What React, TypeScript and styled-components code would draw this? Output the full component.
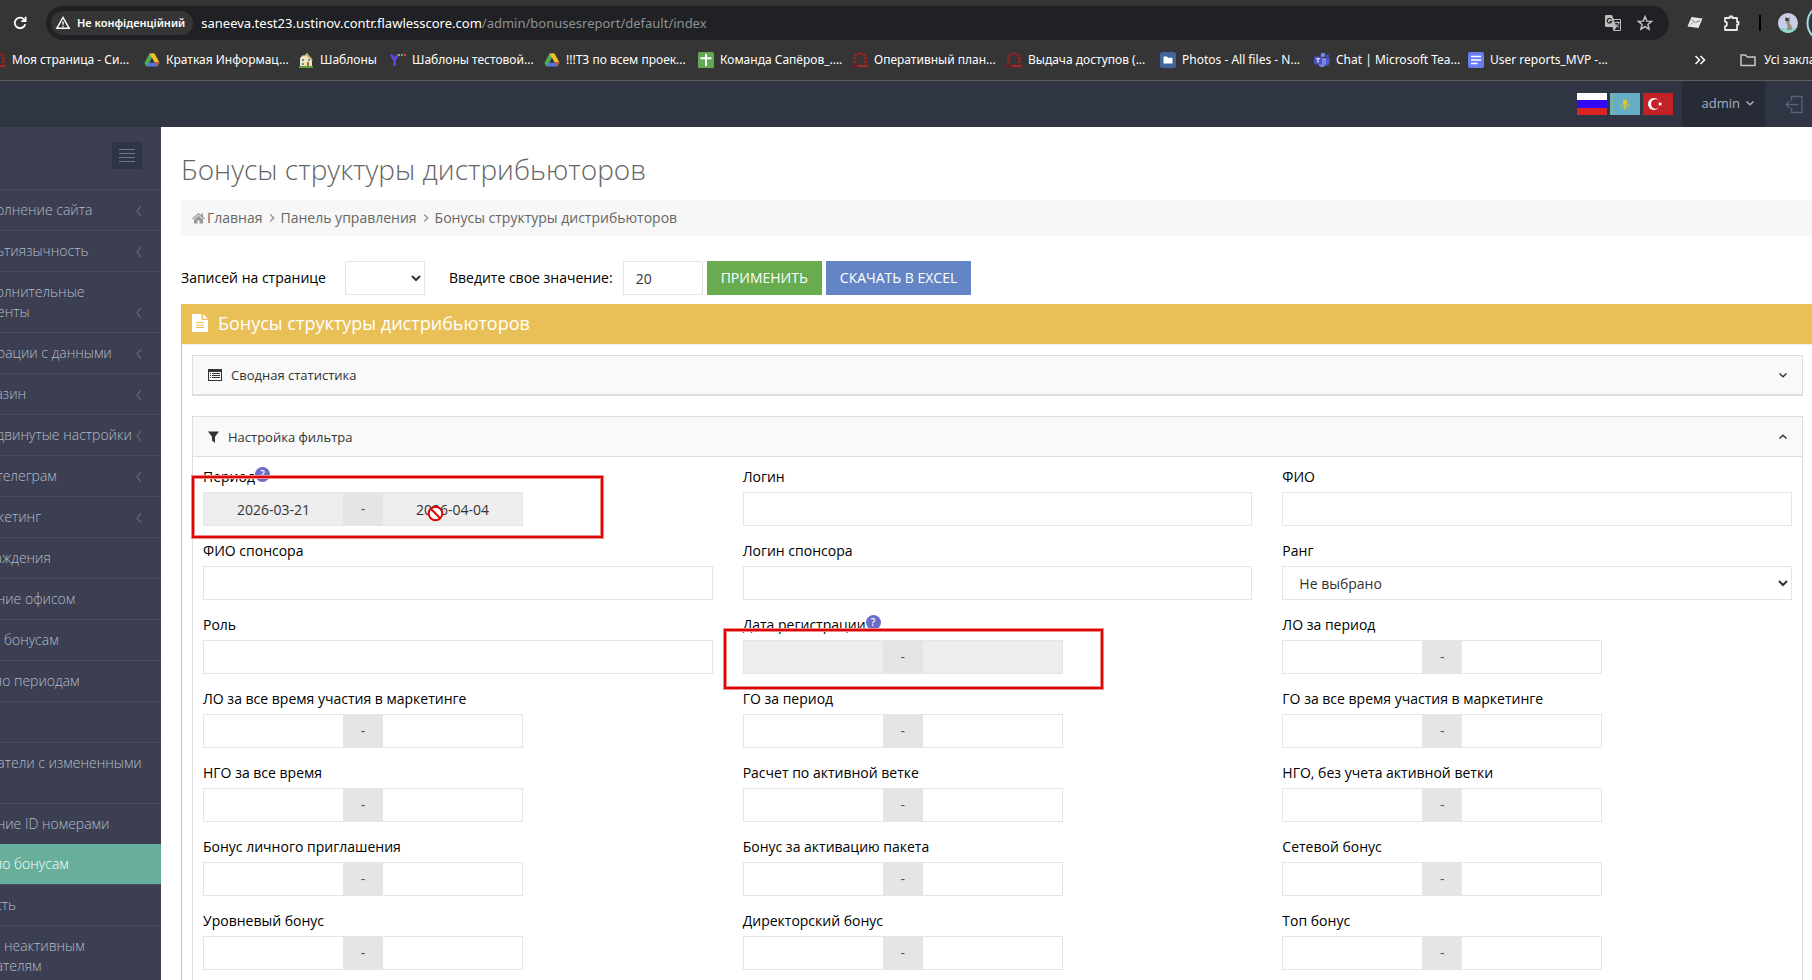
import React from 'react';
import styled, { createGlobalStyle, css } from 'styled-components';

const GlobalStyle = createGlobalStyle`
  * { box-sizing: border-box; }
  body { margin: 0; background: #3b3f51; font-family: "Open Sans", "Noto Sans", sans-serif; font-size: 14px; line-height: 20px; color: #000; }
  button, input, select { font: inherit; }
  h1, h2, ul { margin: 0; padding: 0; font-weight: 400; }
  ul { list-style: none; }
  a { color: inherit; text-decoration: none; }
  svg { display: block; flex: none; }
`;

const Window = styled.div`
  display: flex;
  flex-direction: column;
  height: 100vh;
  overflow: hidden;
`;

/* ---------- browser chrome ---------- */

const Chrome = styled.header`
  flex: none;
  background: #353535;
  border-bottom: 1px solid #5e5e5e;
  color: #fff;
  font-family: "Noto Sans", "Open Sans", sans-serif;
  overflow: hidden;
`;

const AddressRow = styled.div`
  display: flex;
  align-items: center;
  height: 46px;
  padding-left: 10px;
`;

const IconButton = styled.button`
  display: flex;
  align-items: center;
  justify-content: center;
  flex: none;
  width: 20px;
  height: 24px;
  padding: 0;
  border: 0;
  background: none;
  color: inherit;
`;

const AddressBar = styled.div`
  display: flex;
  align-items: center;
  flex: 1;
  height: 34px;
  margin: 0 16px;
  padding: 0 14px 0 5px;
  border-radius: 17px;
  background: #202124;
`;

const SecurityChip = styled.button`
  display: flex;
  align-items: center;
  gap: 6px;
  height: 24px;
  padding: 0 8px 0 4px;
  border: 0;
  border-radius: 12px;
  background: #353535;
  color: #fff;
  font-size: 11px;
  font-weight: 600;
  white-space: nowrap;
`;

const Url = styled.div`
  flex: 1;
  padding-left: 8px;
  color: #8f9296;
  font-size: 13px;
  white-space: nowrap;
  b { font-weight: 400; color: #fff; }
`;

const AddressTools = styled.div`
  display: flex;
  gap: 12px;
  color: #c7c7c7;
`;

const ToolbarTools = styled.div`
  display: flex;
  align-items: center;
  gap: 17px;
  color: #e8e8e8;
`;

const Divider = styled.span`
  width: 2px;
  height: 16px;
  background: #000;
`;

const Avatars = styled.div`
  display: flex;
  align-items: center;
  gap: 8px;
  width: 34px;
  overflow: hidden;
`;

const BookmarkBar = styled.nav`
  display: flex;
  align-items: center;
  height: 34px;
  padding-bottom: 6px;
  font-size: 12px;
`;

const BookmarkList = styled.div`
  display: flex;
  flex: 1;
  gap: 16px;
  margin-left: -10px;
  overflow: hidden;
`;

const Bookmark = styled.a<{ $short?: boolean }>`
  display: flex;
  align-items: center;
  gap: 6px;
  flex: none;
  width: ${p => (p.$short ? 76 : 138)}px;
  white-space: nowrap;
`;

const AllBookmarks = styled.div`
  display: flex;
  align-items: center;
  gap: 17px;
  width: 118px;
  white-space: nowrap;
`;

const FolderLink = styled.a`
  display: flex;
  align-items: center;
  gap: 8px;
`;

/* ---------- admin panel ---------- */

const TopBar = styled.div`
  display: flex;
  flex: none;
  justify-content: flex-end;
  height: 46px;
  background: #2f3543;
`;

const Flags = styled.div`
  display: flex;
  align-items: center;
  gap: 3px;
  padding-right: 9px;
`;

const FlagLink = styled.a`
  display: block;
`;

const UserMenu = styled.button`
  display: flex;
  align-items: center;
  gap: 5px;
  padding: 0 10px 2px 20px;
  border: 0;
  background: #262b36;
  color: #a8b0c2;
  font-size: 13px;
  font-weight: 400;
`;

const Logout = styled.button`
  display: flex;
  align-items: center;
  width: 47px;
  padding: 0 0 0 20px;
  border: 0;
  background: none;
  color: #57617b;
`;

const Body = styled.div`
  display: flex;
  flex: 1;
  min-height: 0;
`;

const Sidebar = styled.aside`
  flex: none;
  width: 161px;
  overflow: hidden;
  background: #3b3f51;
`;

const ToggleRow = styled.div`
  display: flex;
  justify-content: flex-end;
  height: 62px;
  padding: 15px 19px 0 0;
`;

const Toggle = styled.button`
  display: flex;
  align-items: center;
  justify-content: center;
  width: 30px;
  height: 27px;
  padding: 0;
  border: 0;
  background: #2f3543;
  color: #6b7590;
`;

const Menu = styled.ul`
  margin-left: -77px;
`;

const MenuItem = styled.a<{ $active?: boolean; $icon?: boolean }>`
  display: flex;
  align-items: flex-end;
  justify-content: space-between;
  padding: 10px 17px 10px ${p => (p.$icon ? 47 : 18)}px;
  border-top: 1px solid #484d61;
  color: #b4bcc8;
  font-weight: 300;
  white-space: pre;
  ${p => p.$active && css`
    border-top: 0;
    background: #67af9a;
    color: #fff;
  `}
  svg { margin-bottom: 4px; color: #606a84; }
`;

const Main = styled.main`
  flex: 1;
  min-width: 0;
  padding: 24px 0 0 20px;
  overflow: hidden;
  background: #fff;
`;

const PageTitle = styled.h1`
  color: #666;
  font-size: 28px;
  font-weight: 300;
  line-height: 36px;
`;

const Breadcrumbs = styled.nav`
  display: flex;
  align-items: center;
  gap: 4px;
  height: 36px;
  margin: 13px 0 25px;
  padding-left: 11px;
  background: #f7f7f7;
  color: #666;
  a { display: flex; align-items: center; gap: 2px; }
  svg { color: #999; }
`;

const Controls = styled.form`
  display: flex;
  align-items: center;
  gap: 4px;
  margin-bottom: 9px;
`;

const control = css`
  height: 34px;
  border: 1px solid #e5e5e5;
  border-radius: 0;
  background: #fff;
  color: #333;
  outline: 0;
`;

const PageSize = styled.select`
  ${control}
  width: 80px;
  margin: 0 20px 0 15px;
`;

const PageValue = styled.input`
  ${control}
  width: 80px;
  margin-left: 6px;
  padding: 0 12px;
`;

const Action = styled.button<{ $color: string }>`
  height: 34px;
  padding: 0 14px;
  border: 0;
  background: ${p => p.$color};
  color: #fff;
  text-transform: uppercase;
`;

const Portlet = styled.section`
  border-left: 1px solid #e9bf58;
`;

const PortletTitle = styled.h2`
  display: flex;
  align-items: center;
  gap: 10px;
  height: 40px;
  padding: 0 10px 2px;
  background: #e9bf58;
  color: #fff;
  font-size: 18px;
`;

const PortletBody = styled.div`
  padding: 10px 9px 10px 10px;
  border-top: 1px solid #eee;
`;

const Panel = styled.section<{ $collapsed?: boolean }>`
  margin-bottom: 20px;
  border: 1px solid #ddd;
  border-bottom-width: ${p => (p.$collapsed ? 2 : 1)}px;
`;

const PanelHeader = styled.button<{ $open?: boolean }>`
  display: flex;
  align-items: center;
  gap: 9px;
  width: 100%;
  height: ${p => (p.$open ? 40 : 38)}px;
  padding: 0 14px 0 15px;
  border: 0;
  border-bottom: ${p => (p.$open ? '1px solid #ddd' : '0')};
  background: #f9f9f9;
  color: #333;
  font-size: 13px;
  text-align: left;
  span { flex: 1; }
`;

const Fields = styled.div`
  display: grid;
  grid-template-columns: repeat(3, 1fr);
  gap: 15px 30px;
  padding: 10px;
`;

const Field = styled.div`
  position: relative;
  min-width: 0;
`;

const LabelRow = styled.div`
  display: flex;
  height: 20px;
  margin-bottom: 5px;
`;

const Help = styled.button`
  width: 15px;
  height: 15px;
  padding: 0;
  border: 0;
  border-radius: 50%;
  background: #6c6cc9;
  color: #fff;
  font-size: 10px;
  font-weight: 600;
  line-height: 15px;
`;

const TextInput = styled.input`
  ${control}
  display: block;
  width: 100%;
  padding: 0 12px;
`;

const SelectInput = styled.select`
  ${control}
  display: block;
  width: 100%;
  padding: 0 12px;
`;

const Range = styled.div`
  display: flex;
  width: 320px;
`;

const RangeInput = styled.input`
  ${control}
  flex: 1;
  min-width: 0;
  padding: 0 12px;
  text-align: center;
  &:disabled { background: #eee; color: #333; }
`;

const RangeDash = styled.span`
  flex: none;
  width: 38px;
  background: #e5e5e5;
  color: #555;
  line-height: 34px;
  text-align: center;
`;

const Highlight = styled.div<{ $left: number; $top: number; $width: number; $height: number }>`
  position: absolute;
  left: ${p => p.$left}px;
  top: ${p => p.$top}px;
  width: ${p => p.$width}px;
  height: ${p => p.$height}px;
  border: 2px solid #dd0606;
  box-shadow: 0 0 0 1px #ef8a8a, inset 0 0 0 1px #ef8a8a;
  pointer-events: none;
`;

const Blocked = styled.svg`
  position: absolute;
  left: 224px;
  top: 38px;
`;

/* ---------- icons ---------- */

const Chevron = ({ d, size = 10, w = 1.5 }: { d: string; size?: number; w?: number }) => (
  <svg width={size} height={size} viewBox="0 0 10 10" fill="none" stroke="currentColor" strokeWidth={w}><path d={d} /></svg>
);
const DOWN = 'M1.5 3.5 5 6.7 8.5 3.5';
const UP = 'M1.5 6.5 5 3.3 8.5 6.5';
const RIGHT = 'M3.2 1.5 6.8 5 3.2 8.5';
const LEFT = 'M7 0 3 5 7 10';

const Drive = () => (
  <svg width="16" height="16" viewBox="0 0 16 16">
    <path d="M5.5 1.5h5L5 11.5l-2.6 3L.5 11z" fill="#4caf50" />
    <path d="M5.5 1.5h5l5 9h-5z" fill="#f5bd2f" />
    <path d="M4.6 10.5h10.9l-2.2 4H2.4z" fill="#5276e0" />
    <path d="M10.8 10.5h4.7l-2.2 4z" fill="#d9502f" />
    <path d="M8 6 5.6 10.5h4.8z" fill="#353535" />
  </svg>
);
const Redmine = () => (
  <svg width="16" height="16" viewBox="0 0 16 16">
    <path d="M2.5 11V7.500a5.500 6 0 0 1 11 0V11" fill="none" stroke="#a81f24" strokeWidth="2.600" strokeDasharray="2.200 1" />
    <rect x="0" y="12" width="16" height="4" fill="#5a2426" />
    <path d="M6 15v-2l1 1 1-1v2M9.500 13v2M11 15v-2l1.500 2v-2M15.500 13H14v2h1.500" fill="none" stroke="#b5383c" strokeWidth=".8" />
  </svg>
);
const House = () => (
  <svg width="16" height="16" viewBox="0 0 16 16">
    <path d="M2 15V6l3-3 1 1 3-3 5 6v8z" fill="#efe3b8" />
    <path d="M8.500 1 15 8l-1.500.5L8 3z" fill="#b8a46c" />
    <path d="M4 7h2v2H4zM10 7h2v2h-2zM4 11h2v2H4z" fill="#5d8fc4" />
    <path d="M9 10h2v5H9z" fill="#a96b3b" />
    <path d="M1 14h14v2H1z" fill="#5f9c3f" />
  </svg>
);
const YLogo = () => (
  <svg width="16" height="16" viewBox="0 0 16 16">
    <path d="M1 2.500 4.500 8 8 2.500M4.500 7.500V14" fill="none" stroke="#5b4bf0" strokeWidth="2.400" />
    <circle cx="9" cy="3" r="1" fill="#f2b84b" /><circle cx="12" cy="3" r="1.200" fill="#4caf50" /><circle cx="15" cy="3" r="1.200" fill="#e0356b" />
  </svg>
);
const Sheets = () => (
  <svg width="16" height="16" viewBox="0 0 16 16"><rect width="16" height="16" rx="1.500" fill="#62a953" /><path d="M8 2v12M2.500 6.300h11" stroke="#fff" strokeWidth="2" /></svg>
);
const Photos = () => (
  <svg width="16" height="16" viewBox="0 0 16 16"><rect width="16" height="16" rx="2.500" fill="#3f649f" /><path d="M3.500 4.500h3.500l1 1.300h4.500v5.700h-9z" fill="#fff" /></svg>
);
const Teams = () => (
  <svg width="16" height="16" viewBox="0 0 16 16">
    <circle cx="9" cy="3" r="2.300" fill="#7b83eb" /><circle cx="13.500" cy="4" r="1.600" fill="#5059c9" />
    <path d="M10 6h5.500v5a2.700 2.700 0 0 1-3.500 2.500z" fill="#5059c9" /><path d="M4.500 6H12v5.500a4 4 0 0 1-7.500 1.500z" fill="#7b83eb" />
    <rect y="4.500" width="8" height="8" rx="1" fill="#4b53bc" /><path d="M2.200 6.800h3.600M4 6.800v4" stroke="#fff" strokeWidth="1.100" />
  </svg>
);
const Docs = () => (
  <svg width="16" height="16" viewBox="0 0 16 16"><rect width="16" height="16" rx="2" fill="#6a7df0" /><path d="M3 4.500h10M3 8h10M3 11.500h6.500" stroke="#fff" strokeWidth="1.500" /></svg>
);

const bookmarks: { text: string; Icon: React.FC; short?: boolean }[] = [
  { text: 'Моя страница - Си...', Icon: Redmine },
  { text: 'Краткая Информац...', Icon: Drive },
  { text: 'Шаблоны', Icon: House, short: true },
  { text: 'Шаблоны тестовой...', Icon: YLogo },
  { text: '!!!ТЗ по всем проек...', Icon: Drive },
  { text: 'Команда Сапёров_....', Icon: Sheets },
  { text: 'Оперативный план...', Icon: Redmine },
  { text: 'Выдача доступов (...', Icon: Redmine },
  { text: 'Photos - All files - N...', Icon: Photos },
  { text: 'Chat | Microsoft Tea...', Icon: Teams },
  { text: 'User reports_MVP -...', Icon: Docs },
];

const menu: { text: string; arrow?: boolean; icon?: boolean; active?: boolean }[] = [
  { text: 'Наполнение сайта', arrow: true, icon: true },
  { text: 'Мультиязычность', arrow: true, icon: true },
  { text: 'Дополнительные\nмоменты', arrow: true, icon: true },
  { text: 'Операции с данными', arrow: true, icon: true },
  { text: 'Магазин', arrow: true, icon: true },
  { text: 'Продвинутые настройки', arrow: true, icon: true },
  { text: 'Бот телеграм', arrow: true, icon: true },
  { text: 'Маркетинг', arrow: true, icon: true },
  { text: 'Вознаграждения' },
  { text: 'Управление офисом' },
  { text: 'Отчет по бонусам' },
  { text: 'Отчеты по периодам' },
  { text: 'Выплаты' },
  { text: 'Пользователи с измененными\nрангом' },
  { text: 'Управление ID номерами' },
  { text: 'Отчеты по бонусам', active: true },
  { text: 'Активность' },
  { text: 'Отчет по неактивным\nпользователям' },
];

type FieldSpec = { label: string; kind: 'text' | 'select' | 'range'; help?: boolean; values?: [string, string]; mark?: [number, number, number, number]; blocked?: boolean };
const fields: FieldSpec[] = [
  { label: 'Период', kind: 'range', help: true, values: ['2026-03-21', '2026-04-04'], mark: [-11, 9, 411, 62], blocked: true },
  { label: 'Логин', kind: 'text' },
  { label: 'ФИО', kind: 'text' },
  { label: 'ФИО спонсора', kind: 'text' },
  { label: 'Логин спонсора', kind: 'text' },
  { label: 'Ранг', kind: 'select' },
  { label: 'Роль', kind: 'text' },
  { label: 'Дата регистрации', kind: 'range', help: true, values: ['', ''], mark: [-19, 14, 379, 60] },
  { label: 'ЛО за период', kind: 'range' },
  { label: 'ЛО за все время участия в маркетинге', kind: 'range' },
  { label: 'ГО за период', kind: 'range' },
  { label: 'ГО за все время участия в маркетинге', kind: 'range' },
  { label: 'НГО за все время', kind: 'range' },
  { label: 'Расчет по активной ветке', kind: 'range' },
  { label: 'НГО, без учета активной ветки', kind: 'range' },
  { label: 'Бонус личного приглашения', kind: 'range' },
  { label: 'Бонус за активацию пакета', kind: 'range' },
  { label: 'Сетевой бонус', kind: 'range' },
  { label: 'Уровневый бонус', kind: 'range' },
  { label: 'Директорский бонус', kind: 'range' },
  { label: 'Топ бонус', kind: 'range' },
];

const FilterField = ({ spec, id }: { spec: FieldSpec; id: string }) => (
  <Field>
    <LabelRow>
      <label htmlFor={id}>{spec.label}</label>
      {spec.help && <Help type="button">?</Help>}
    </LabelRow>
    {spec.kind === 'text' && <TextInput id={id} type="text" />}
    {spec.kind === 'select' && <SelectInput id={id}><option>Не выбрано</option></SelectInput>}
    {spec.kind === 'range' && (
      <Range>
        <RangeInput id={id} disabled={!!spec.values} defaultValue={spec.values?.[0]} />
        <RangeDash>-</RangeDash>
        <RangeInput aria-label={spec.label} disabled={!!spec.values} defaultValue={spec.values?.[1]} />
      </Range>
    )}
    {spec.mark && <Highlight $left={spec.mark[0]} $top={spec.mark[1]} $width={spec.mark[2]} $height={spec.mark[3]} />}
    {spec.blocked && (
      <Blocked width="17" height="17" viewBox="0 0 17 17">
        <circle cx="8.500" cy="8.500" r="6.800" fill="#fff" stroke="#dd0606" strokeWidth="2" />
        <path d="M4 4l9 9" stroke="#dd0606" strokeWidth="2" />
      </Blocked>
    )}
  </Field>
);

export default function App() {
  return (
    <Window>
      <GlobalStyle />
      <Chrome>
        <AddressRow>
          <IconButton aria-label="Reload">
            <svg width="16" height="16" viewBox="0 0 16 16" fill="none" stroke="currentColor" strokeWidth="1.800"><path d="M13.200 9.200A5.300 5.300 0 1 1 12 4.300l1 1.200" /><path d="M13.600 1.800v4.300H9.300" /></svg>
          </IconButton>
          <AddressBar>
            <SecurityChip>
              <svg width="16" height="16" viewBox="0 0 16 16" fill="none" stroke="currentColor" strokeWidth="1.400"><path d="M8 2.500 1.800 13.300h12.400z" /><path d="M8 6.500v3.300M8 10.700v1.300" /></svg>
              Не конфіденційний
            </SecurityChip>
            <Url><b>saneeva.test23.ustinov.contr.flawlesscore.com</b>/admin/bonusesreport/default/index</Url>
            <AddressTools>
              <IconButton aria-label="Translate">
                <svg width="18" height="18" viewBox="0 0 18 18"><path d="M2 1h6l1.500 4H16a1 1 0 0 1 1 1v10a1 1 0 0 1-1 1H9.500L8.500 13H2a1 1 0 0 1-1-1V2a1 1 0 0 1 1-1z" fill="#bdbdbd" /><path d="M9.800 6H16v10h-5.500l2-3z" fill="#202124" /><path d="M7.500 5.600A2.300 2.300 0 1 0 7.700 7.500H5.600" fill="none" stroke="#202124" strokeWidth="1.200" /><path d="M10.800 8.500h5M13.300 7.500v1M15 8.700c-.5 2.200-1.700 3.500-3.200 4.500M11.800 10c.7 1.600 1.900 2.800 3.400 3.600" fill="none" stroke="#bdbdbd" strokeWidth="1" /></svg>
              </IconButton>
              <IconButton aria-label="Bookmark">
                <svg width="16" height="16" viewBox="0 0 16 16" fill="none" stroke="currentColor" strokeWidth="1.400"><path d="m8 1.600 1.800 4.500 4.800.3-3.700 3.100 1.200 4.700L8 11.600l-4.100 2.600 1.200-4.700L1.400 6.400l4.800-.3z" /></svg>
              </IconButton>
            </AddressTools>
          </AddressBar>
          <ToolbarTools>
            <IconButton aria-label="Extension">
              <svg width="16" height="14" viewBox="0 0 16 14"><path d="M4.500 1 15.500 2.500 11.500 12 .5 10.500z" fill="#e8e8e8" /><path d="m5 4 3.500 2.500L13 4.500M4 8.500l2-2" fill="none" stroke="#777" /></svg>
            </IconButton>
            <IconButton aria-label="Extensions">
              <svg width="18" height="18" viewBox="0 0 18 18" fill="none" stroke="currentColor" strokeWidth="1.800" strokeLinejoin="round"><path d="M2 4h4.800V2.500h2.600V4H14v4h1.500v2.600H14V16H2v-3.500c2.600-.5 2.600-4.500 0-5z" /></svg>
            </IconButton>
            <Divider />
            <Avatars>
              <svg width="20" height="20" viewBox="0 0 20 20"><circle cx="10" cy="10" r="10" fill="#c9cde6" /><path d="M1.500 15a10 10 0 0 0 17 0z" fill="#8fd6cb" /><path d="M7 3l2 2h2l1-1.500V9l-1 1c2 1 3 3 3 7H9c1-3 0-6-1-8z" fill="#9a8f80" /><path d="M7.500 5h3v3h-3z" fill="#3b3530" /></svg>
              <svg width="40" height="40" viewBox="0 0 40 40"><circle cx="20" cy="20" r="18.500" fill="none" stroke="#9fdcea" strokeWidth="2" /></svg>
            </Avatars>
          </ToolbarTools>
        </AddressRow>
        <BookmarkBar>
          <BookmarkList>
            {bookmarks.map(({ text, Icon, short }) => (
              <Bookmark key={text} href="#" $short={short}><Icon />{text}</Bookmark>
            ))}
          </BookmarkList>
          <AllBookmarks>
            <svg width="12" height="12" viewBox="0 0 12 12" fill="none" stroke="#fff" strokeWidth="1.500"><path d="m1.500 2 4 4-4 4M6.500 2l4 4-4 4" /></svg>
            <Divider />
            <FolderLink href="#">
              <svg width="16" height="16" viewBox="0 0 16 16" fill="none" stroke="#c7c7c7" strokeWidth="1.500"><path d="M1 3h4.500l1.800 2H15v8.500H1z" strokeLinejoin="round" /></svg>
              Усі закладки
            </FolderLink>
          </AllBookmarks>
        </BookmarkBar>
      </Chrome>
      <TopBar>
        <Flags>
          <FlagLink href="#" aria-label="Русский"><svg width="30" height="22"><rect width="30" height="22" fill="#fff" /><rect y="7" width="30" height="8" fill="#3208f5" /><rect y="15" width="30" height="7" fill="#d92323" /></svg></FlagLink>
          <FlagLink href="#" aria-label="Қазақша"><svg width="30" height="22"><rect width="30" height="22" fill="#67adc4" /><path d="M2 1v20" stroke="#b9bf4a" strokeDasharray="2 1" /><ellipse cx="15" cy="9.500" rx="2" ry="3" fill="#e9c71f" /><path d="M11 10.500c.5 5 7.500 5 8 0" fill="none" stroke="#c9bf3c" strokeWidth="1.300" /><path d="M15 13v3.500" stroke="#d9c22c" strokeWidth="1.500" /></svg></FlagLink>
          <FlagLink href="#" aria-label="Türkçe"><svg width="30" height="22"><rect width="30" height="22" fill="#c22126" /><circle cx="11" cy="11" r="6" fill="#fff" /><circle cx="12.800" cy="11" r="4.800" fill="#c22126" /><path d="m14.500 11 1.600-.6.2-1.700 1.100 1.300 1.700-.5-1 1.500 1 1.500-1.700-.5-1.100 1.300-.2-1.700z" fill="#fff" /></svg></FlagLink>
        </Flags>
        <UserMenu>admin<Chevron d={DOWN} /></UserMenu>
        <Logout aria-label="Logout">
          <svg width="19" height="19" viewBox="0 0 19 19" fill="none" stroke="currentColor" strokeWidth="1.300"><path d="M6.500 6V1.500h10.500v16H6.500V13M13 9.500H1M4.500 6 1 9.500 4.500 13" /></svg>
        </Logout>
      </TopBar>
      <Body>
        <Sidebar>
          <ToggleRow>
            <Toggle aria-label="Toggle menu"><svg width="16" height="14" viewBox="0 0 16 14" stroke="currentColor"><path d="M0 .5h16M0 4.500h16M0 8.500h16M0 12.500h16" /></svg></Toggle>
          </ToggleRow>
          <Menu>
            {menu.map((m, i) => (
              <li key={i}>
                <MenuItem href="#" $icon={m.icon} $active={m.active}>{m.text}{m.arrow && <Chevron d={LEFT} w={1.2} />}</MenuItem>
              </li>
            ))}
          </Menu>
        </Sidebar>
        <Main>
          <PageTitle>Бонусы структуры дистрибьюторов</PageTitle>
          <Breadcrumbs>
            <a href="#"><svg width="13" height="12" viewBox="0 0 13 12" fill="currentColor"><path d="M6.500 1 0 6.500l.8.900L6.500 2.700l5.700 4.700.8-.9-2-1.700V1.500H9.200v1.800z" /><path d="M6.500 3.800 2 7.500V11.500h3.500V8.500h2v3H11v-4z" /></svg>Главная</a>
            <Chevron d={RIGHT} />
            <a href="#">Панель управления</a>
            <Chevron d={RIGHT} />
            <span>Бонусы структуры дистрибьюторов</span>
          </Breadcrumbs>
          <Controls onSubmit={e => e.preventDefault()}>
            <label htmlFor="page-size">Записей на странице</label>
            <PageSize id="page-size"><option></option></PageSize>
            <label htmlFor="page-value">Введите свое значение:</label>
            <PageValue id="page-value" defaultValue="20" />
            <Action type="submit" $color="#69ac4f">Применить</Action>
            <Action type="button" $color="#6485c5">Скачать в Excel</Action>
          </Controls>
          <Portlet>
            <PortletTitle>
              <svg width="16" height="18" viewBox="0 0 16 18"><path d="M0 0h9.500v6H16v12H0z" fill="#fff" /><path d="M11 0l5 4.700h-5z" fill="#fff" /><path d="M4 8.500h8M4 11h8M4 13.500h8" stroke="#e9bf58" /></svg>
              Бонусы структуры дистрибьюторов
            </PortletTitle>
            <PortletBody>
              <Panel $collapsed>
                <PanelHeader type="button">
                  <svg width="14" height="12" viewBox="0 0 14 12"><rect x=".5" y=".5" width="13" height="11" fill="none" stroke="#333" /><path d="M0 0h14v3H0z" fill="#333" /><path d="M4 4.500h8M4 6.500h8M4 8.500h8M2 4.500h1M2 6.500h1M2 8.500h1" stroke="#333" /></svg>
                  <span>Сводная статистика</span>
                  <Chevron d={DOWN} />
                </PanelHeader>
              </Panel>
              <Panel>
                <PanelHeader type="button" $open>
                  <svg width="11" height="12" viewBox="0 0 11 12"><path d="M0 .5h11L7 5.800V12L4 9.500V5.800z" fill="#333" /></svg>
                  <span>Настройка фильтра</span>
                  <Chevron d={UP} />
                </PanelHeader>
                <Fields>
                  {fields.map((f, i) => <FilterField key={f.label} spec={f} id={`filter-${i}`} />)}
                </Fields>
              </Panel>
            </PortletBody>
          </Portlet>
        </Main>
      </Body>
    </Window>
  );
}
